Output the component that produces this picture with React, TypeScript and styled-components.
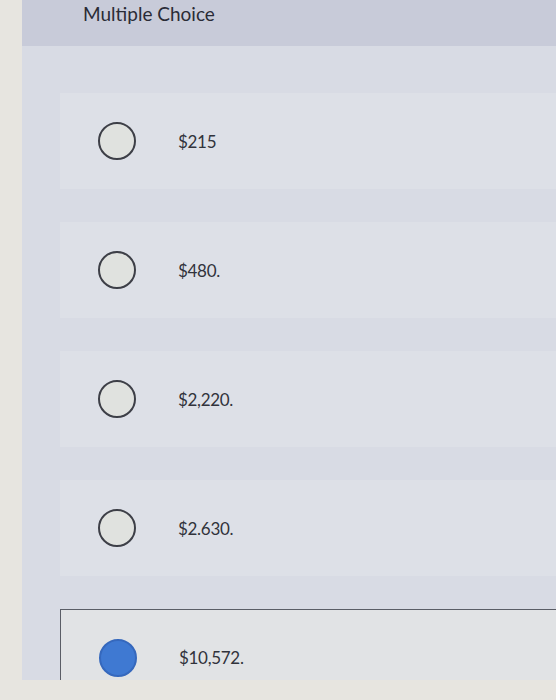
import styled, { createGlobalStyle } from 'styled-components';

const GlobalStyle = createGlobalStyle`
    html, body {
        margin: 0;
        padding: 0;
        background: #e7e5e0;
        font-family: Lato, "Open Sans", sans-serif;
    }
`;

const Screen = styled.div`
    width: 556px;
    height: 700px;
    display: flex;
    flex-direction: column;
    overflow: hidden;
`;

const Panel = styled.div`
    margin-left: 22px;
    height: 680px;
    background: #d8dbe4;
    display: flex;
    flex-direction: column;
    overflow: hidden;
`;

const Header = styled.div`
    height: 46px;
    flex-shrink: 0;
    background: #c8cbd9;
    padding-left: 61px;
    box-sizing: border-box;
    color: #2a2b36;
    font-size: 19px;
    line-height: 28px;
`;

const Choices = styled.div`
    display: flex;
    flex-direction: column;
    gap: 33px;
    padding: 47px 0 0 38px;
`;

const Choice = styled.div<{ $selected?: boolean }>`
    height: 96px;
    flex-shrink: 0;
    display: flex;
    align-items: center;
    gap: 42px;
    padding-left: 38px;
    box-sizing: border-box;
    background: ${p => (p.$selected ? '#e1e3e5' : '#dde0e7')};
    border-top: ${p => (p.$selected ? '1px solid #5a5d66' : 'none')};
    border-left: ${p => (p.$selected ? '1px solid #5a5d66' : 'none')};
    padding-top: ${p => (p.$selected ? '0' : '0')};
`;

const Radio = styled.span<{ $checked?: boolean }>`
    width: 38px;
    height: 38px;
    border-radius: 50%;
    box-sizing: border-box;
    flex-shrink: 0;
    border: 2px solid ${p => (p.$checked ? '#3568bd' : '#3d3f47')};
    background: ${p => (p.$checked ? '#3f79d2' : '#e0e2df')};
`;

const Label = styled.span`
    font-size: 17px;
    color: #31333b;
    letter-spacing: -0.3px;
`;

const options = ['$215', '$480.', '$2,220.', '$2.630.', '$10,572.'];

export default function App() {
    const selected = 4;
    return (
        <>
            <GlobalStyle />
            <Screen>
                <Panel>
                    <Header>Multiple Choice</Header>
                    <Choices>
                        {options.map((o, i) => (
                            <Choice key={o} $selected={i === selected}>
                                <Radio $checked={i === selected} />
                                <Label>{o}</Label>
                            </Choice>
                        ))}
                    </Choices>
                </Panel>
            </Screen>
        </>
    );
}
